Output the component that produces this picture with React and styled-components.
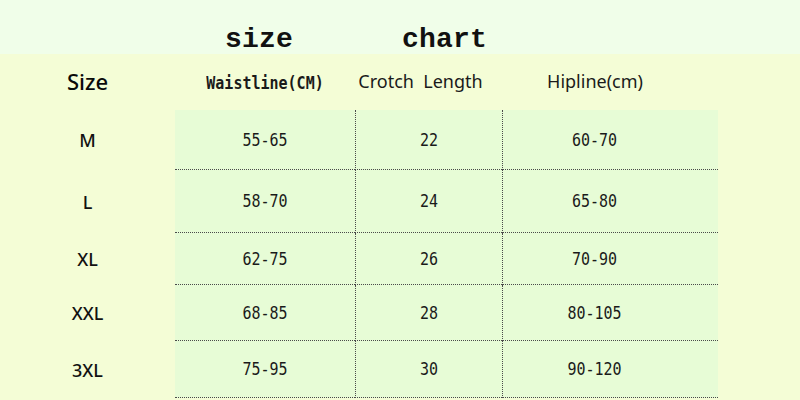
import styled, { createGlobalStyle } from "styled-components";

const rows = [
  { size: "M", waist: "55-65", crotch: "22", hip: "60-70", height: 60 },
  { size: "L", waist: "58-70", crotch: "24", hip: "65-80", height: 63 },
  { size: "XL", waist: "62-75", crotch: "26", hip: "70-90", height: 52 },
  { size: "XXL", waist: "68-85", crotch: "28", hip: "80-105", height: 56 },
  { size: "3XL", waist: "75-95", crotch: "30", hip: "90-120", height: 57 },
];

const GlobalStyle = createGlobalStyle`
  html, body {
    margin: 0;
    padding: 0;
  }
  body {
    font-family: "Noto Sans", "Open Sans", sans-serif;
  }
`;

export default function App() {
  return (
    <>
      <GlobalStyle />
      <Page>
        <TitleBand>
          <TitleWord>size</TitleWord>
          <TitleWord>chart</TitleWord>
        </TitleBand>
        <Chart>
          <HeaderRow>
            <SizeHead>Size</SizeHead>
            <MonoHead>Waistline(CM)</MonoHead>
            <SansHead $shift={16}>Crotch&nbsp; Length</SansHead>
            <SansHead $shift={30}>Hipline(cm)</SansHead>
          </HeaderRow>
          {rows.map((r) => (
            <BodyRow key={r.size} $height={r.height}>
              <SizeCell>{r.size}</SizeCell>
              <DataCell>
                <Num>{r.waist}</Num>
              </DataCell>
              <DataCell $divider>
                <Num>{r.crotch}</Num>
              </DataCell>
              <DataCell $divider $padRight={32}>
                <Num>{r.hip}</Num>
              </DataCell>
            </BodyRow>
          ))}
        </Chart>
      </Page>
    </>
  );
}

const Page = styled.div`
  width: 800px;
  height: 400px;
  overflow: hidden;
  background-color: #f4fdd6;
  display: flex;
  flex-direction: column;
`;

const TitleBand = styled.header`
  height: 54px;
  flex-shrink: 0;
  background-color: #f0fee9;
  display: flex;
  align-items: flex-end;
  padding-left: 225px;
  gap: 109px;
  box-sizing: border-box;
`;

const TitleWord = styled.span`
  font-family: "Liberation Mono", "DejaVu Sans Mono", monospace;
  font-weight: 700;
  font-size: 28px;
  line-height: 28px;
  color: #111;
  letter-spacing: 0.2px;
`;

const Chart = styled.section`
  display: flex;
  flex-direction: column;
`;

const gridColumns = "175px 180px 147px 216px";

const HeaderRow = styled.div`
  display: grid;
  grid-template-columns: ${gridColumns};
  height: 56px;
  align-items: center;
`;

const SizeHead = styled.div`
  text-align: center;
  font-size: 22px;
  font-weight: 500;
  color: #0a0a0a;
  padding-bottom: 2px;
`;

const MonoHead = styled.div`
  text-align: center;
  font-family: "DejaVu Sans Mono", "Liberation Mono", monospace;
  font-weight: 700;
  font-size: 15px;
  color: #1a1a1a;
  transform: scaleY(1.15);
  padding-top: 2px;
`;

const SansHead = styled.div`
  text-align: center;
  font-size: 18px;
  color: #1a1a1a;
  padding-right: ${(p) => p.$shift || 0}px;
  padding-bottom: 3px;
`;

const BodyRow = styled.div`
  display: grid;
  grid-template-columns: ${gridColumns};
  height: ${(p) => p.$height}px;
`;

const SizeCell = styled.div`
  display: flex;
  align-items: center;
  justify-content: center;
  font-size: 18px;
  font-weight: 500;
  color: #111;
`;

const DataCell = styled.div`
  display: flex;
  align-items: center;
  justify-content: center;
  background-color: #e7fcd6;
  border-bottom: 1px dotted #4a4a4a;
  border-left: ${(p) => (p.$divider ? "1px dotted #4a4a4a" : "none")};
  padding-right: ${(p) => p.$padRight || 0}px;
`;

const Num = styled.span`
  display: inline-block;
  font-family: "DejaVu Sans Mono", "Liberation Mono", monospace;
  font-size: 15px;
  color: #1a1a1a;
  transform: scaleY(1.2);
`;
